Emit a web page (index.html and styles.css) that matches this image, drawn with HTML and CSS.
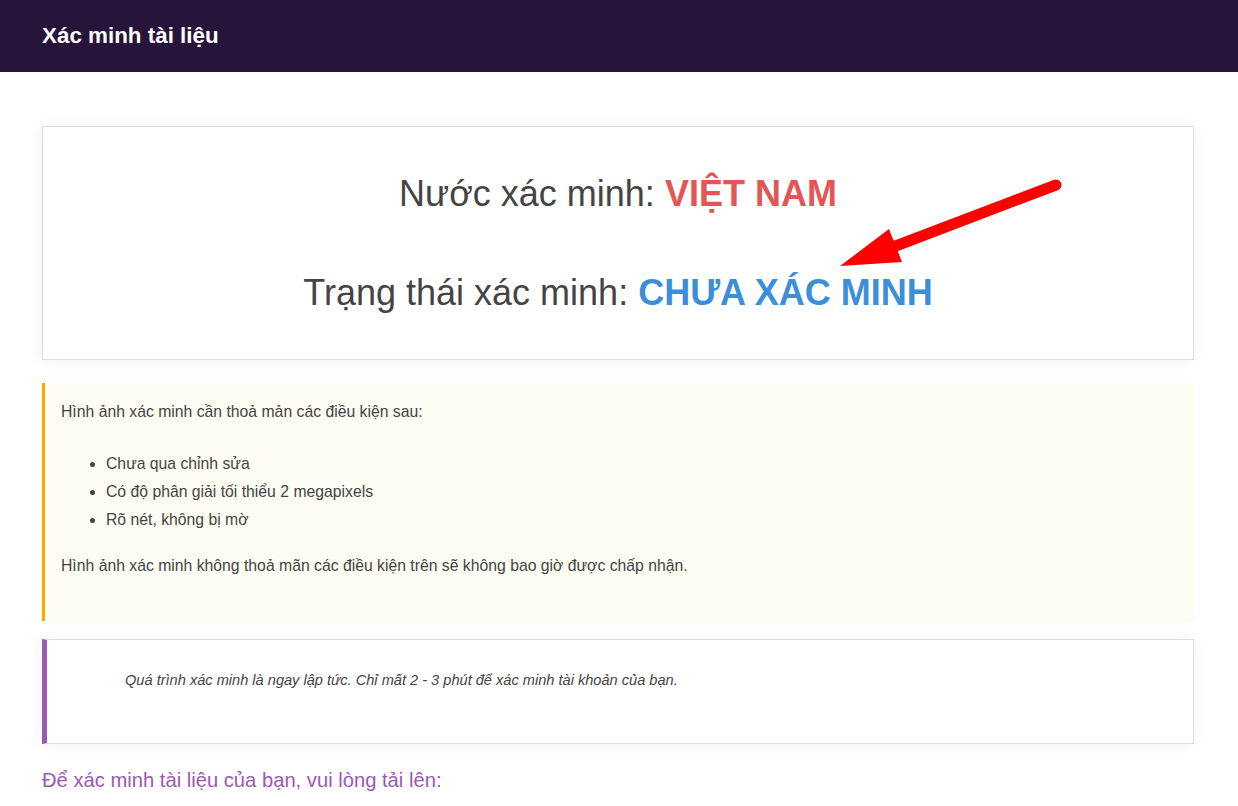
FILE: index.html
```html
<!DOCTYPE html>
<html lang="vi">
<head>
    <meta charset="UTF-8">
    <title>Xác minh tài liệu</title>
    <link rel="stylesheet" href="styles.css">
</head>
<body>

    <header class="topbar">
        <h1>Xác minh tài liệu</h1>
    </header>

    <div class="page">

        <!-- Trạng thái xác minh -->
        <div class="status-card">
            <div class="status-line">Nước xác minh: <span class="country">VIỆT NAM</span></div>
            <div class="status-line">Trạng thái xác minh: <span class="state">CHƯA XÁC MINH</span></div>

            <svg class="arrow" aria-hidden="true">
                <line x1="1013" y1="58" x2="850" y2="120" stroke="#ff0000" stroke-width="11" stroke-linecap="round"/>
                <polygon points="797,139 846,102 859,135" fill="#ff0000"/>
            </svg>
        </div>

        <!-- Điều kiện hình ảnh -->
        <div class="notice notice-warning">
            <p>Hình ảnh xác minh cần thoả mản các điều kiện sau:</p>
            <ul>
                <li>Chưa qua chỉnh sửa</li>
                <li>Có độ phân giải tối thiểu 2 megapixels</li>
                <li>Rõ nét, không bị mờ</li>
            </ul>
            <p>Hình ảnh xác minh không thoả mãn các điều kiện trên sẽ không bao giờ được chấp nhận.</p>
        </div>

        <div class="notice notice-info">
            <p>Quá trình xác minh là ngay lập tức. Chỉ mất 2 - 3 phút để xác minh tài khoản của bạn.</p>
        </div>

        <h2 class="upload-title">Để xác minh tài liệu của bạn, vui lòng tải lên:</h2>
    </div>

</body>
</html>
```

FILE: styles.css
```css
body { margin: 0; font-family: "Liberation Sans", Arial, sans-serif; color: #444; background: #fff; }

.topbar { background: #28133b; height: 72px; padding-left: 42px; }
.topbar h1 { margin: 0; color: #fff; font-size: 22.4px; line-height: 72px; font-weight: bold; }

.page { padding: 54px 44px 40px 42px; }

.status-card { position: relative; border: 1px solid #ddd; box-shadow: 0 0 14px rgba(0,0,0,0.06); padding: 47px 20px 46px; text-align: center; }
.status-line { font-size: 36px; line-height: 40px; }
.status-line + .status-line { margin-top: 59px; }
.country { color: #e35656; font-weight: bold; }
.state { color: #3b8fd9; font-weight: bold; }
.arrow { position: absolute; left: 0; top: 0; width: 100%; height: 100%; overflow: visible; pointer-events: none; }

.notice p { margin: 0; }
.notice-warning { margin-top: 23px; background: #fdfdf3; border-left: 3px solid #ffa500; padding: 15px 16px 41px; font-size: 15.75px; line-height: 28px; }
.notice-warning ul { margin: 24px 0 18px; padding-left: 45px; }
.notice-info { margin-top: 18px; border: 1px solid #ddd; border-left: 5px solid #9b59b6; box-shadow: 0 0 14px rgba(0,0,0,0.06); padding: 30px 20px 53px 78px; font-size: 14.6px; line-height: 20px; font-style: italic; }

.upload-title { margin: 24px 0 0; color: #9b59b6; font-size: 20.2px; line-height: 24px; font-weight: normal; }
```
